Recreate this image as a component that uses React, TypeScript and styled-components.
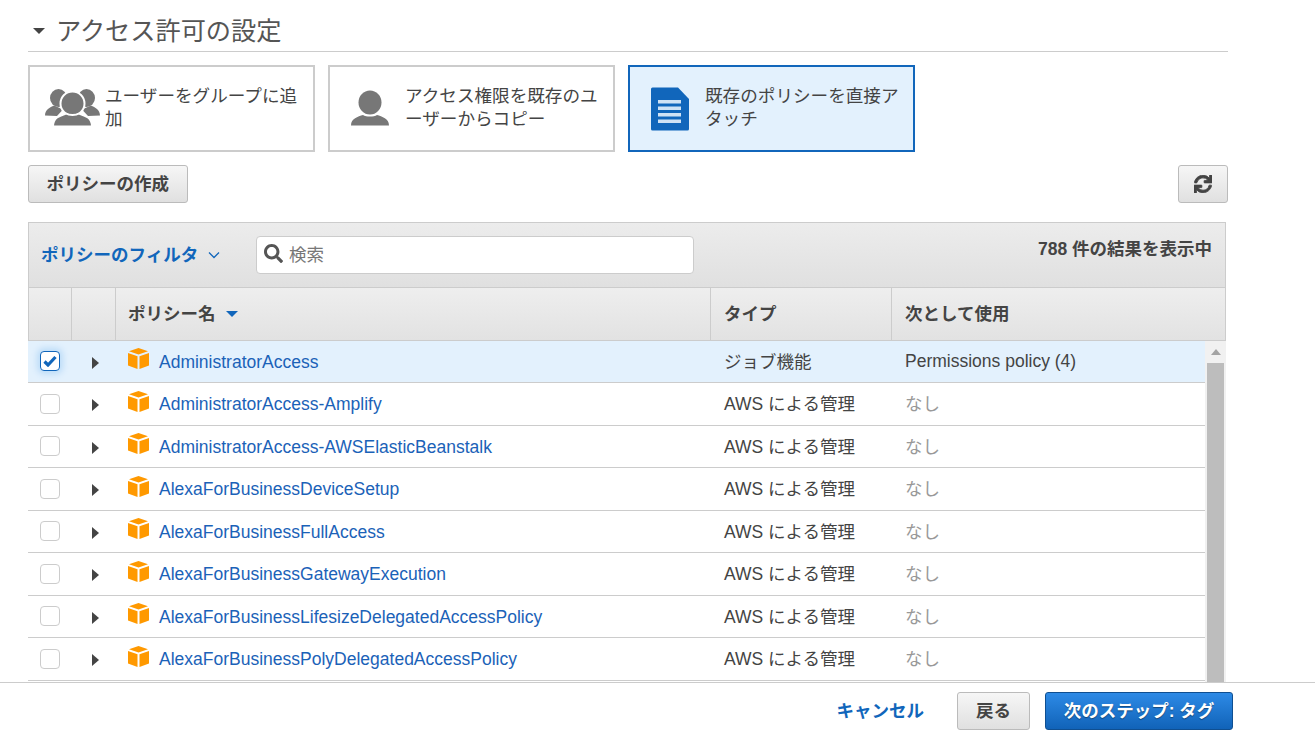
import React from 'react';
import styled, { createGlobalStyle } from 'styled-components';
import { FaSearch, FaSync } from 'react-icons/fa';

const GlobalStyle = createGlobalStyle`
  html, body {
    margin: 0;
    padding: 0;
    background: #fff;
  }
  body {
    font-family: "Liberation Sans", "Noto Sans CJK JP", sans-serif;
    font-size: 17.5px;
    color: #444;
  }
`;

const Page = styled.div`
  display: flex;
  flex-direction: column;
  height: 100vh;
  overflow: hidden;
`;

const Main = styled.main`
  flex: 1;
  min-height: 0;
  overflow: hidden;
  padding: 0 87px 0 28px;
`;

const SectionHeader = styled.div`
  display: flex;
  align-items: center;
  gap: 11px;
  height: 52px;
  padding: 6px 0 0 5px;
  box-sizing: border-box;
  border-bottom: 1px solid #ccc;
`;

const Caret = styled.span`
  width: 0;
  height: 0;
  margin-top: 5px;
  border-left: 6px solid transparent;
  border-right: 6px solid transparent;
  border-top: 6px solid #444;
`;

const SectionTitle = styled.h2`
  margin: 0;
  font-size: 25.2px;
  font-weight: 400;
  color: #555;
`;

const Cards = styled.div`
  display: flex;
  gap: 13px;
  margin-top: 13px;
`;

const Card = styled.div<{ $selected?: boolean }>`
  display: flex;
  align-items: center;
  gap: 4px;
  width: 287px;
  height: 87px;
  padding: 0 14px 0 15px;
  box-sizing: border-box;
  border: 2px solid ${p => (p.$selected ? '#1166bb' : '#ccc')};
  background: ${p => (p.$selected ? '#e3f1fd' : '#fff')};
`;

const CardIcon = styled.svg`
  flex: none;
  width: 56px;
  height: 50px;
`;

const CardText = styled.span`
  font-size: 17.6px;
  line-height: 23px;
  color: #444;
  margin-top: -1px;
`;

const Toolbar = styled.div`
  display: flex;
  justify-content: space-between;
  margin-top: 13px;
`;

const Button = styled.button`
  display: inline-flex;
  align-items: center;
  justify-content: center;
  height: 38px;
  padding: 0 17.5px 4px;
  box-sizing: border-box;
  border: 1px solid #bbb;
  border-radius: 3px;
  background: linear-gradient(#f6f6f6, #e0e0e0);
  color: #444;
  font-family: inherit;
  font-size: 17.5px;
  font-weight: 700;
`;

const RefreshButton = styled(Button)`
  width: 50px;
  padding: 0;
`;

const FilterBar = styled.div`
  display: flex;
  align-items: flex-start;
  height: 65px;
  margin-top: 19px;
  width: 1198px;
  box-sizing: border-box;
  border: 1px solid #ccc;
  border-bottom: 0;
  background: linear-gradient(#ececec, #e0e0e0);
`;

const FilterLabel = styled.div`
  display: flex;
  align-items: center;
  gap: 10px;
  width: 227px;
  height: 61px;
  padding-left: 12px;
  box-sizing: border-box;
  color: #1166bb;
  font-weight: 700;
`;

const SearchBox = styled.div`
  display: flex;
  align-items: center;
  gap: 6px;
  width: 438px;
  height: 38px;
  margin-top: 13px;
  padding: 0 0 3px 7px;
  box-sizing: border-box;
  background: #fff;
  border: 1px solid #ccc;
  border-radius: 4px;
  color: #777;
`;

const ResultCount = styled.div`
  margin: 12px 13px 0 auto;
  font-weight: 700;
  color: #444;
`;

const columns = '43px 44px 595px 181px 1fr';

const HeaderRow = styled.div`
  display: grid;
  grid-template-columns: 42px 44px 595px 181px 1fr;
  width: 1198px;
  height: 53.5px;
  box-sizing: border-box;
  border: 1px solid #ccc;
  background: linear-gradient(#eeeeee, #e2e2e2);
  font-weight: 700;
`;

const HeaderCell = styled.div`
  display: flex;
  align-items: center;
  gap: 10px;
  padding: 0 0 3px 13px;
  border-left: 1px solid #ccc;
  &:first-child {
    border-left: 0;
  }
`;

const NameHeaderCell = styled(HeaderCell)`
  padding-left: 12px;
`;

const SortCaret = styled.span`
  width: 0;
  height: 0;
  margin-top: 4px;
  border-left: 6.5px solid transparent;
  border-right: 6.5px solid transparent;
  border-top: 6.5px solid #1166bb;
`;

const TableBody = styled.div`
  display: flex;
  width: 1198px;
`;

const Rows = styled.div`
  width: 1177px;
`;

const Row = styled.div<{ $selected?: boolean }>`
  display: grid;
  grid-template-columns: ${columns};
  align-items: center;
  height: 42.5px;
  box-sizing: border-box;
  border-bottom: 1px solid #ccc;
  background: ${p => (p.$selected ? '#e3f1fd' : '#fff')};
`;

const CheckCell = styled.div`
  display: flex;
  justify-content: center;
  padding-left: 1px;
`;

const Check = styled.span<{ $checked?: boolean }>`
  display: flex;
  align-items: center;
  justify-content: center;
  width: 20px;
  height: 20px;
  box-sizing: border-box;
  background: #fff;
  border-radius: 4px;
  border: 1px solid ${p => (p.$checked ? '#1166bb' : '#ccc')};
  box-shadow: ${p => (p.$checked ? '0 0 6px 3px #bcdcf8' : 'none')};
`;

const ExpandCell = styled.div`
  display: flex;
  justify-content: center;
  padding: 3px 0 0 5px;
`;

const Expand = styled.span`
  width: 0;
  height: 0;
  border-top: 6px solid transparent;
  border-bottom: 6px solid transparent;
  border-left: 7px solid #444;
`;

const NameCell = styled.div`
  display: flex;
  align-items: center;
  gap: 10px;
  padding-left: 13px;
`;

const PolicyLink = styled.a`
  color: #1b62b8;
  text-decoration: none;
  margin-top: 2px;
`;

const TextCell = styled.div<{ $muted?: boolean }>`
  padding: 0 0 2px 14px;
  color: ${p => (p.$muted ? '#999' : '#444')};
`;

const UsedByCell = styled.div`
  padding: 1px 0 0 14px;
  color: #444;
`;

const Scrollbar = styled.div`
  display: flex;
  flex-direction: column;
  align-items: center;
  width: 21px;
  min-height: 360px;
  background: #f1f1f1;
`;

const ScrollArrow = styled.span`
  width: 0;
  height: 0;
  margin: 8px 0 8px;
  border-left: 5px solid transparent;
  border-right: 5px solid transparent;
  border-bottom: 6px solid #a3a3a3;
`;

const ScrollThumb = styled.div`
  flex: 1;
  width: 17px;
  background: #bdbdbd;
`;

const Footer = styled.footer`
  flex: none;
  display: flex;
  align-items: center;
  justify-content: flex-end;
  height: 56px;
  padding: 0 82px 0 0;
  box-sizing: border-box;
  background: #fff;
  border-top: 1px solid #ccc;
`;

const CancelLink = styled.a`
  color: #1166bb;
  font-weight: 700;
  margin: -2px 33px 0 0;
`;

const BackButton = styled(Button)`
  width: 73px;
  padding: 0 0 2px;
  margin-right: 15px;
`;

const NextButton = styled(Button)`
  width: 188px;
  padding: 0 0 2px;
  color: #fff;
  border-color: #0f4f91;
  background: linear-gradient(#2d8ae6, #1163b8);
  text-shadow: 0 1px 1px rgba(0, 0, 0, 0.4);
`;

const GroupIcon = () => (
  <CardIcon viewBox="0 0 56 50">
    <g fill="#777">
      <ellipse cx="13.5" cy="14" rx="8.5" ry="9" />
      <ellipse cx="41.5" cy="14" rx="8.5" ry="9" />
      <path d="M0 31.5c0-6 5-8 9-10l9 4-6 6.5z" />
      <path d="M55 31.5c0-6-5-8-9-10l-9 4 6 6.5z" />
    </g>
    <g fill="#777" stroke="#fff" strokeWidth="2">
      <ellipse cx="27.5" cy="19.5" rx="12" ry="12" />
      <path d="M8 42.5c0-9 7-11 13-13 3 2 10 2 13 0 6 2 13 4 13 13z" />
    </g>
  </CardIcon>
);

const UserIcon = () => (
  <CardIcon viewBox="0 0 56 50">
    <g fill="#777">
      <ellipse cx="25" cy="18.5" rx="11.5" ry="12" />
      <path d="M6 41.5c0-7 7-9 12-10.5 3 2 11 2 14 0 5 1.5 12 3.5 12 10.5z" />
    </g>
  </CardIcon>
);

const DocIcon = () => (
  <CardIcon viewBox="0 0 56 50">
    <path
      fill="#1166bb"
      d="M6 5a1.5 1.5 0 0 1 1.5-1.5H33L44 15v30a1.5 1.5 0 0 1-1.5 1.5h-35A1.5 1.5 0 0 1 6 45z"
    />
    <g fill="#cfe2f5">
      <rect x="13" y="16" width="23" height="3.5" />
      <rect x="13" y="22.5" width="23" height="3.5" />
      <rect x="13" y="29" width="23" height="3.5" />
      <rect x="13" y="35.5" width="23" height="3.5" />
    </g>
  </CardIcon>
);

const CubeIcon = () => (
  <svg width="21" height="21" viewBox="0 0 21 21" style={{ flex: 'none', marginTop: -5 }}>
    <path fill="#ff9900" d="M10.5 0 20 3.3 10.5 6.6 1 3.3z" />
    <path fill="#ff9900" d="M0 5l9.5 3.2V21L0 17.6z" />
    <path fill="#ff9900" d="M21 5l-9.5 3.2V21L21 17.6z" />
  </svg>
);

const Chevron = () => (
  <svg width="12" height="8" viewBox="0 0 12 8" style={{ marginTop: 3 }}>
    <path d="M1 1.5l5 5 5-5" fill="none" stroke="#1166bb" strokeWidth="1.3" />
  </svg>
);

const CheckMark = () => (
  <svg width="14" height="12" viewBox="0 0 14 12">
    <path d="M1.5 6.5 5 10l7.5-8" fill="none" stroke="#1166bb" strokeWidth="3.2" />
  </svg>
);

const policies = [
  { name: 'AdministratorAccess', type: 'ジョブ機能', used: 'Permissions policy (4)', selected: true },
  { name: 'AdministratorAccess-Amplify', type: 'AWS による管理', used: 'なし' },
  { name: 'AdministratorAccess-AWSElasticBeanstalk', type: 'AWS による管理', used: 'なし' },
  { name: 'AlexaForBusinessDeviceSetup', type: 'AWS による管理', used: 'なし' },
  { name: 'AlexaForBusinessFullAccess', type: 'AWS による管理', used: 'なし' },
  { name: 'AlexaForBusinessGatewayExecution', type: 'AWS による管理', used: 'なし' },
  { name: 'AlexaForBusinessLifesizeDelegatedAccessPolicy', type: 'AWS による管理', used: 'なし' },
  { name: 'AlexaForBusinessPolyDelegatedAccessPolicy', type: 'AWS による管理', used: 'なし' },
];

export default function App() {
  return (
    <Page>
      <GlobalStyle />
      <Main>
        <SectionHeader>
          <Caret />
          <SectionTitle>アクセス許可の設定</SectionTitle>
        </SectionHeader>
        <Cards>
          <Card>
            <GroupIcon />
            <CardText>ユーザーをグループに追加</CardText>
          </Card>
          <Card>
            <UserIcon />
            <CardText>アクセス権限を既存のユーザーからコピー</CardText>
          </Card>
          <Card $selected>
            <DocIcon />
            <CardText>既存のポリシーを直接アタッチ</CardText>
          </Card>
        </Cards>
        <Toolbar>
          <Button>ポリシーの作成</Button>
          <RefreshButton>
            <FaSync size={18} color="#444" stroke="#444" strokeWidth={24} />
          </RefreshButton>
        </Toolbar>
        <FilterBar>
          <FilterLabel>
            ポリシーのフィルタ
            <Chevron />
          </FilterLabel>
          <SearchBox>
            <FaSearch size={19} color="#555" />
            検索
          </SearchBox>
          <ResultCount>788 件の結果を表示中</ResultCount>
        </FilterBar>
        <HeaderRow>
          <HeaderCell />
          <HeaderCell />
          <NameHeaderCell>
            ポリシー名
            <SortCaret />
          </NameHeaderCell>
          <HeaderCell>タイプ</HeaderCell>
          <HeaderCell>次として使用</HeaderCell>
        </HeaderRow>
        <TableBody>
          <Rows>
            {policies.map(policy => (
              <Row key={policy.name} $selected={policy.selected}>
                <CheckCell>
                  <Check $checked={policy.selected}>{policy.selected && <CheckMark />}</Check>
                </CheckCell>
                <ExpandCell>
                  <Expand />
                </ExpandCell>
                <NameCell>
                  <CubeIcon />
                  <PolicyLink>{policy.name}</PolicyLink>
                </NameCell>
                <TextCell>{policy.type}</TextCell>
                {policy.selected ? (
                  <UsedByCell>{policy.used}</UsedByCell>
                ) : (
                  <TextCell $muted>{policy.used}</TextCell>
                )}
              </Row>
            ))}
          </Rows>
          <Scrollbar>
            <ScrollArrow />
            <ScrollThumb />
          </Scrollbar>
        </TableBody>
      </Main>
      <Footer>
        <CancelLink>キャンセル</CancelLink>
        <BackButton>戻る</BackButton>
        <NextButton>次のステップ: タグ</NextButton>
      </Footer>
    </Page>
  );
}
